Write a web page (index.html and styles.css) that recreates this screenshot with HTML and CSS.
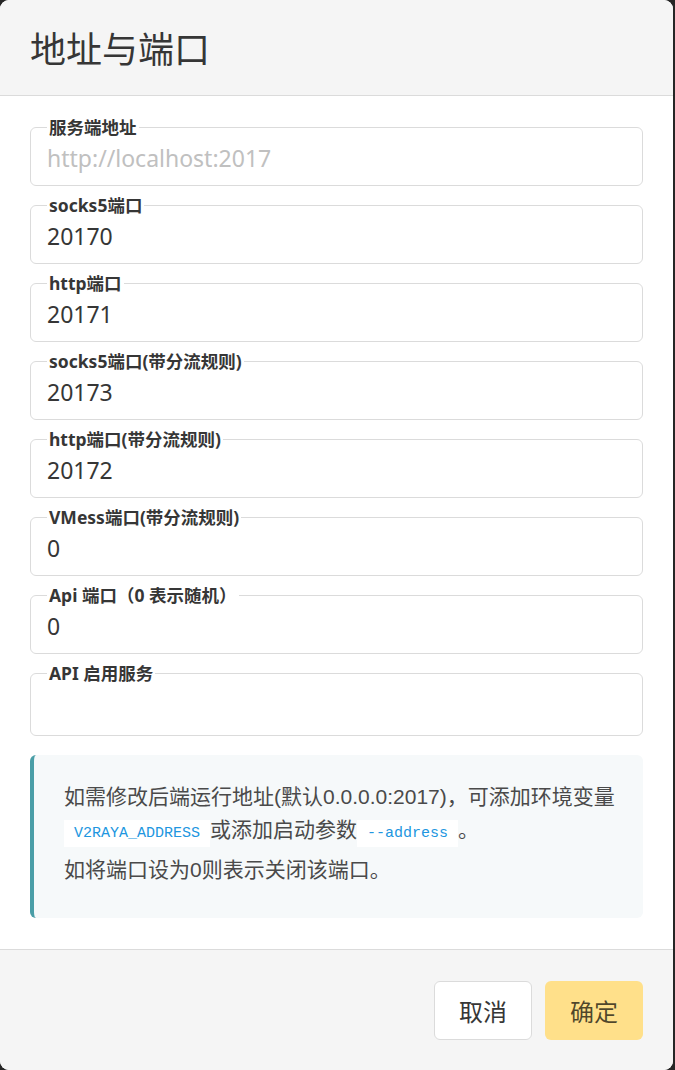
FILE: index.html
```html
<!DOCTYPE html>
<html lang="zh-CN">
<head>
<meta charset="utf-8">
<title>地址与端口</title>
<link rel="stylesheet" href="styles.css">
</head>
<body>
<div class="modal-card">
  <header class="card-head">
    <h1 class="card-title">地址与端口</h1>
  </header>
  <section class="card-body">
    <fieldset class="field">
      <legend class="field-label">服务端地址</legend>
      <input class="field-input" type="text" placeholder="http://localhost:2017">
    </fieldset>
    <fieldset class="field">
      <legend class="field-label">socks5端口</legend>
      <input class="field-input" type="text" value="20170">
    </fieldset>
    <fieldset class="field">
      <legend class="field-label">http端口</legend>
      <input class="field-input" type="text" value="20171">
    </fieldset>
    <fieldset class="field">
      <legend class="field-label">socks5端口(带分流规则)</legend>
      <input class="field-input" type="text" value="20173">
    </fieldset>
    <fieldset class="field">
      <legend class="field-label">http端口(带分流规则)</legend>
      <input class="field-input" type="text" value="20172">
    </fieldset>
    <fieldset class="field">
      <legend class="field-label">VMess端口(带分流规则)</legend>
      <input class="field-input" type="text" value="0">
    </fieldset>
    <fieldset class="field">
      <legend class="field-label">Api 端口（0 表示随机）</legend>
      <input class="field-input" type="text" value="0">
    </fieldset>
    <fieldset class="field field-tall">
      <legend class="field-label">API 启用服务</legend>
      <input class="field-input" type="text" value="">
    </fieldset>
    <article class="message">
      <p class="message-line"><span class="nowrap">如需修改后端运行地址(默认0.0.0.0:2017)，可添加环境变量</span><br><code class="code">V2RAYA_ADDRESS</code>或添加启动参数<code class="code">--address</code>。</p>
      <p class="message-line message-second">如将端口设为0则表示关闭该端口。</p>
    </article>
  </section>
  <footer class="card-foot">
    <button class="btn" type="button">取消</button>
    <button class="btn btn-warning" type="button">确定</button>
  </footer>
</div>
</body>
</html>
```
FILE: styles.css
```css
html, body {
  margin: 0;
  padding: 0;
}
body {
  background: #262626;
  width: 675px;
  height: 1070px;
  overflow: hidden;
  font-family: "Noto Sans", "Noto Sans CJK SC", sans-serif;
  color: #363636;
}
.modal-card {
  width: 673px;
  height: 1070px;
  background: #fff;
  border-radius: 9px;
  overflow: hidden;
  display: flex;
  flex-direction: column;
}
.card-head {
  background: #f5f5f5;
  height: 96px;
  box-sizing: border-box;
  border-bottom: 1px solid #dbdbdb;
  padding: 0 30px;
  display: flex;
  align-items: center;
  flex-shrink: 0;
}
.card-title {
  margin: 0;
  font-family: "Noto Sans CJK SC", sans-serif;
  font-weight: 400;
  font-size: 36px;
  line-height: 1;
  color: #363636;
  padding-bottom: 2px;
}
.card-body {
  flex: 1;
  padding: 22px 30px 0 30px;
  box-sizing: border-box;
}
.field {
  margin: 0 0 10px 0;
  padding: 0 16px 0 16px;
  border: 1px solid #dbdbdb;
  border-radius: 6px;
  min-inline-size: 0;
}
.field-label {
  padding: 0 2px;
  font-family: "Noto Sans", "Noto Sans CJK SC", sans-serif;
  font-weight: 700;
  font-size: 17.5px;
  line-height: 18px;
  color: #363636;
}
.field-input {
  display: block;
  width: 100%;
  box-sizing: border-box;
  height: 55px;
  margin: -6px 0 0 0;
  padding: 0;
  border: 0;
  outline: none;
  background: transparent;
  font-family: "Noto Sans", "Noto Sans CJK SC", sans-serif;
  font-size: 23px;
  color: #363636;
}
.field-input::placeholder {
  color: #c0c0c0;
}
.field-tall .field-input {
  height: 59px;
}
.message {
  margin-top: 19px;
  background: #f6f9fa;
  border-left: 4px solid #4a9ea7;
  border-radius: 6px;
  padding: 25px 30px 35px 30px;
  height: 163px;
  box-sizing: border-box;
  font-family: "Liberation Sans", "Noto Sans CJK SC", sans-serif;
  font-size: 21px;
  color: #4a4a4a;
}
.nowrap {
  white-space: nowrap;
}
.message-line {
  margin: 0;
  line-height: 33px;
}
.message-second {
  margin-top: 3px;
}
.code {
  background: #fff;
  color: #2196e0;
  font-family: "Liberation Mono", "DejaVu Sans Mono", monospace;
  font-size: 15px;
  padding: 5px 10px;
}
.card-foot {
  background: #f5f5f5;
  border-top: 1px solid #dbdbdb;
  padding: 31px 30px 30px 30px;
  display: flex;
  justify-content: flex-end;
  gap: 13px;
  flex-shrink: 0;
}
.btn {
  height: 59px;
  box-sizing: border-box;
  padding: 0 24px;
  border: 1px solid #dbdbdb;
  border-radius: 6px;
  background: #fff;
  font-family: "Noto Sans CJK SC", sans-serif;
  font-size: 24px;
  color: #363636;
  cursor: pointer;
}
.btn-warning {
  background: #ffe08a;
  border-color: transparent;
  color: rgba(0, 0, 0, 0.7);
}
```
